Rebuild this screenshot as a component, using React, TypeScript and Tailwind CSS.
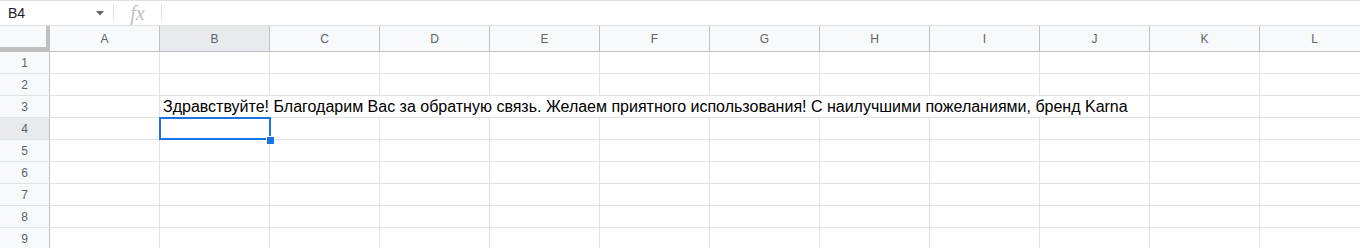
import React from "react";

const COLS = ["A", "B", "C", "D", "E", "F", "G", "H", "I", "J", "K", "L"];
const ROWS = [1, 2, 3, 4, 5, 6, 7, 8, 9];

function Cell({ w = "w-[110px]" }: { w?: string }) {
  return <div className={`${w} h-[22px] shrink-0 border-r border-b border-[#e2e2e2] bg-white`} />;
}

function RowHeader({ n, selected }: { n: number; selected?: boolean }) {
  return (
    <div
      className={`w-[50px] h-[22px] shrink-0 flex items-center justify-center border-r border-b border-r-[#c0c0c0] border-b-[#e2e2e2] text-[12px] text-[#5f6368] ${
        selected ? "bg-[#e8eaed]" : "bg-[#f8f9fa]"
      }`}
    >
      {n}
    </div>
  );
}

export default function App() {
  return (
    <div
      className="w-[1360px] h-[248px] overflow-hidden bg-white relative"
      style={{ fontFamily: '"Liberation Sans", Arial, sans-serif' }}
    >
      {/* formula bar */}
      <div className="h-[26px] flex items-center border-t border-b border-[#e2e2e2] bg-white">
        <div className="w-[113px] h-full flex items-center pl-[8px] pr-[9px]">
          <span className="text-[14px] text-[#202124] flex-1">B4</span>
          <svg width="8" height="5" viewBox="0 0 8 5" className="mt-[1px]">
            <path d="M0 0 L8 0 L4 4.5 Z" fill="#5f6368" />
          </svg>
        </div>
        <div className="w-px h-[18px] bg-[#e2e2e2]" />
        <div
          className="w-[47px] h-full flex items-center justify-center text-[20px] italic text-[#bdc1c6]"
          style={{ fontFamily: '"Liberation Serif", "Times New Roman", serif' }}
        >
          fx
        </div>
        <div className="w-px h-[18px] bg-[#e2e2e2]" />
      </div>

      {/* column headers */}
      <div className="flex h-[26px] border-b border-[#c0c0c0]">
        <div className="w-[50px] h-full shrink-0 bg-[#f8f9fa] border-r-[4px] border-b-[4px] border-[#c0c0c0] box-border" />
        {COLS.map((c) => (
          <div
            key={c}
            className={`w-[110px] h-full shrink-0 flex items-center justify-center border-r border-[#c0c0c0] text-[12px] text-[#5f6368] ${
              c === "B" ? "bg-[#e8eaed]" : "bg-[#f8f9fa]"
            }`}
          >
            {c}
          </div>
        ))}
      </div>

      {/* rows */}
      <div className="flex flex-col relative">
        {ROWS.map((r) => (
          <div key={r} className="flex">
            <RowHeader n={r} selected={r === 4} />
            {r === 3 ? (
              <>
                <Cell />
                <div className="w-[990px] h-[22px] shrink-0 border-r border-b border-[#e2e2e2] flex items-end pl-[3px] pb-[1px] whitespace-nowrap text-[16px] text-black leading-[19px]">
                  Здравствуйте! Благодарим Вас за обратную связь. Желаем приятного использования! С наилучшими пожеланиями, бренд Karna
                </div>
                <Cell />
                <Cell />
              </>
            ) : (
              COLS.map((c) => <Cell key={c} />)
            )}
          </div>
        ))}
        {/* selection */}
        <div className="absolute left-[159px] top-[65px] w-[112px] h-[23px] border-2 border-[#1a73e8] pointer-events-none" />
        <div className="absolute left-[266px] top-[84px] w-[7px] h-[7px] bg-[#1a73e8] border border-white box-content" />
      </div>
    </div>
  );
}
